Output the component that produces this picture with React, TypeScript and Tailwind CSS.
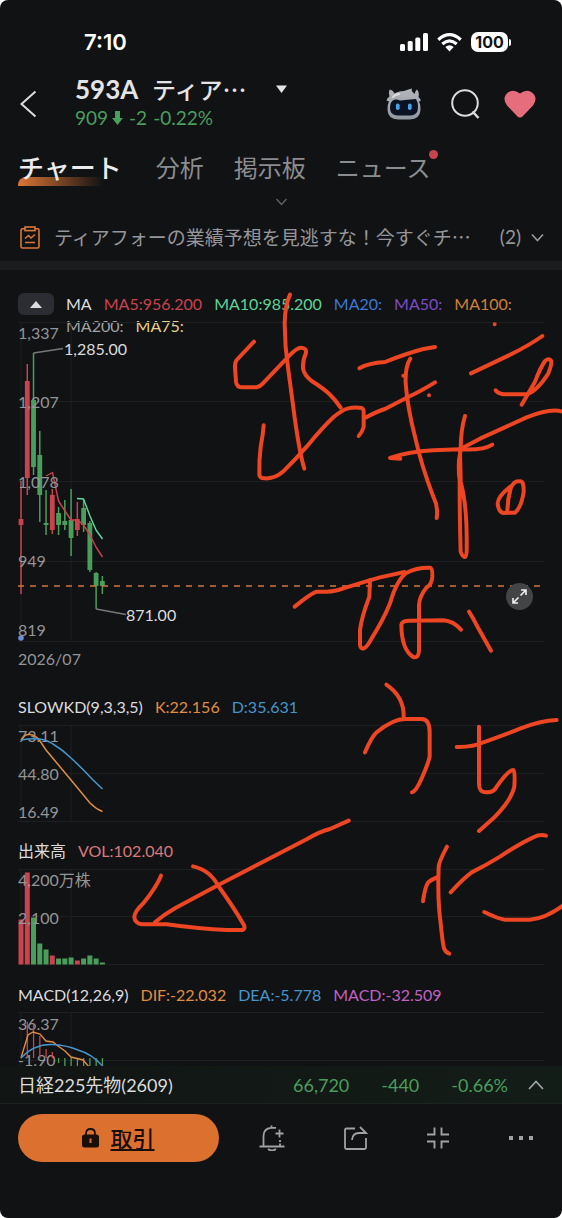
import { useState } from "react";
import type { ReactNode } from "react";

const RED = "#c9434f";
const GREEN = "#4a9e5c";

type Candle = { high: number; low: number; top: number; bottom: number; up?: boolean };

const candles: Candle[] = [
  { high: 160, low: 273, top: 198, bottom: 204, up: true },
  { high: 43, low: 174, top: 60, bottom: 157, up: true },
  { high: 32, low: 154, top: 79, bottom: 146 },
  { high: 110, low: 201, top: 134, bottom: 174 },
  { high: 169, low: 214, top: 202, bottom: 204 },
  { high: 168, low: 213, top: 174, bottom: 209, up: true },
  { high: 186, low: 214, top: 192, bottom: 204 },
  { high: 179, low: 209, top: 200, bottom: 204 },
  { high: 168, low: 235, top: 199, bottom: 217 },
  { high: 181, low: 215, top: 198, bottom: 209, up: true },
  { high: 179, low: 211, top: 187, bottom: 204 },
  { high: 200, low: 251, top: 202, bottom: 249 },
  { high: 251, low: 288, top: 252, bottom: 265 },
  { high: 255, low: 273, top: 260, bottom: 265 },
];

const volumes = [45, 92, 47, 21, 15, 9, 6, 6, 7, 4, 6, 9, 6, 2];
const histogram = [0, 36, 35, 22, 9, 6, -5, -9, -9, -9, -9, -9, -9, -9];

const slotX = (i: number) => 3 + i * 6.26;

// Freehand marks, grouped by the part of the screen they were drawn on
const marks = [
  {
    origin: "translate(220 280) scale(0.33333)",
    paths: [
      "M102 185L50 240Q44 248 45 262L48 305Q50 322 68 322L110 322Q120 320 128 311L205 230Q230 202 245 203Q262 205 257 222Q248 240 249 265Q252 285 275 303Q310 325 328 342Q345 358 362 383",
      "M210 44Q195 75 194 130Q194 200 205 270L225 420Q240 525 253 566",
      "M131 436Q129 465 122 500Q117 540 118 585Q120 596 135 595Q165 597 190 574Q225 540 260 500Q310 440 340 412Q365 390 385 385Q405 380 425 384Q432 387 431 400L431 440Q428 455 416 468",
      "M434 414Q470 395 495 387L560 353Q600 335 645 307",
      "M418 265Q445 249 495 246Q560 220 610 207L645 201",
      "M571 236Q555 260 557 310Q562 380 585 470Q605 560 640 650Q655 680 650 714",
      "M541 536L510 534Q560 516 640 511L720 508Q790 512 817 494",
      "M735 408Q722 450 722 510L717 540Q715 580 719 600Q719 720 722 815Q728 832 735 831Q741 830 740 800Q742 680 722 605L720 510",
      "M720 508L780 476L920 412Q1000 380 1035 398",
      "M753 280L865 227Q930 195 967 168",
      "M827 331Q832 340 850 343L920 342Q950 335 985 280Q995 255 994 243Q988 232 975 243Q960 265 945 305L905 374",
      "M872 619Q832 650 833 672Q836 696 850 699L885 698Q905 680 911 635Q912 603 900 604Q882 600 872 625Q862 660 862 698",
      "M824 133h.1M627 346h.1M550 287h.1",
    ],
  },
  {
    origin: "translate(280 550) scale(0.33333)",
    paths: [
      "M44 170Q95 128 110 125Q150 127 175 120Q230 102 300 82L374 66",
      "M270 90L268 140Q245 200 240 240L240 285Q242 298 252 295Q262 290 275 265Q310 210 330 160Q350 90 380 68Q410 52 450 53Q458 55 457 80Q455 105 440 112Q418 140 417 165L417 300Q417 325 400 321Q365 300 364 225Q365 213 385 212L490 211Q520 213 543 239",
      "M567 185Q580 205 595 235L633 302",
      "M319 404Q372 440 371 500",
      "M255 607Q275 560 290 547Q340 505 380 507L425 507Q450 508 449 550L449 620Q445 640 425 685Q408 724 396 727",
      "M530 591Q580 592 610 577Q690 548 720 536Q780 512 830 510",
      "M597 530L597 700Q596 728 620 727Q640 728 650 710Q685 660 700 660Q706 662 703 710Q695 750 640 805L597 843",
    ],
  },
  {
    origin: "translate(320 800) scale(0.33333)",
    paths: [
      "M381 140Q357 185 356 200Q352 300 362 370Q368 430 372 445Q378 458 388 461",
      "M309 304Q315 260 325 247Q335 238 354 231",
      "M392 277Q430 235 455 217Q500 195 540 170Q600 130 640 112Q660 102 678 107",
      "M493 336Q535 357 555 359L630 359Q680 355 735 312",
    ],
  },
  {
    origin: "translate(0 830) scale(0.33333)",
    paths: [
      "M1046 -28L990 -3Q960 4 920 28L655 165L525 235Q490 255 465 277",
      "M483 137Q470 170 430 220Q403 245 403 262Q405 280 425 283L500 283Q600 297 680 300L728 300Q735 297 733 287Q700 230 655 168Q630 120 579 109",
    ],
  },
];

function Marks() {
  return (
    <svg viewBox="0 0 562 1218" className="pointer-events-none absolute left-0 top-0 w-full" fill="none" stroke="#ee4523" strokeWidth="12" strokeLinecap="round" strokeLinejoin="round" aria-hidden="true">
      {marks.map(m => (
        <g key={m.origin} transform={m.origin}>
          {m.paths.map(d => <path key={d} d={d} />)}
        </g>
      ))}
    </svg>
  );
}

function Grid({ rows, bottom }: { rows: number[]; bottom: number }) {
  return (
    <g stroke="#1d1f21" strokeWidth="1">
      {rows.map(y => <line key={y} x1="0" x2="100%" y1={y} y2={y} />)}
      <line x1="3" x2="3" y1={rows[0]} y2={bottom} />
      <line x1="53" x2="53" y1={rows[0]} y2={bottom} />
    </g>
  );
}

function AxisLabels({ items }: { items: [string, number][] }) {
  return (
    <g fill="#949597" fontSize="16">
      {items.map(([label, y]) => <text key={label} x="0" y={y}>{label}</text>)}
    </g>
  );
}

function PanelTitle({ children }: { children: ReactNode }) {
  return <div className="flex h-6 items-center gap-3 whitespace-nowrap text-base text-[#dcdcde]">{children}</div>;
}

function PriceChart() {
  return (
    <svg className="-mt-4 block h-[350px] w-full" role="img" aria-label="ローソク足チャート">
      <Grid rows={[1.5, 80.5, 160.5, 240.5, 320.5]} bottom={320.5} />
      {candles.map((c, i) => (
        <g key={i} fill={c.up ? RED : GREEN}>
          <rect x={slotX(i) - 0.75} y={c.high} width="1.5" height={c.low - c.high} />
          <rect x={slotX(i) - 2.4} y={c.top} width="4.8" height={c.bottom - c.top} />
        </g>
      ))}
      <g fill="none" strokeWidth="1.4" strokeLinejoin="round">
        <path d="M28 155L34.5 151.5L40.5 180L47 190L53 199L59.5 199L65.5 204L72 214L78 226L84.5 236" stroke={RED} />
        <path d="M59 177.5L65.5 178L72 195L78 209L84.5 218" stroke="#5fdc9d" />
        <path d="M15.5 32L45 27.5M78 288L108 293.5" stroke="#77787a" />
      </g>
      <line x1="0" x2="100%" y1="265" y2="265" stroke="#d0763c" strokeWidth="1.6" strokeDasharray="6 6" />
      <circle cx="3" cy="317" r="2.8" fill="#6f8bd8" />
      <AxisLabels items={[["1,337", 18], ["1,207", 87], ["1,078", 167], ["949", 246], ["819", 315], ["2026/07", 344]]} />
      <g fill="#dcdcde" fontSize="16">
        <text x="46" y="34">1,285.00</text>
        <text x="108" y="300">871.00</text>
      </g>
    </svg>
  );
}

function SlowKdChart() {
  return (
    <svg className="block h-[120px] w-full" role="img" aria-label="SLOWKD">
      <Grid rows={[6.5, 54.5, 102.5]} bottom={102.5} />
      <AxisLabels items={[["73.11", 23], ["44.80", 61], ["16.49", 99]]} />
      <g fill="none" strokeWidth="1.5">
        <path d="M3 21Q7 15 11 15.5Q17 15 22 22L28 31L53 61L72 84Q78 90 84.5 92.5" stroke="#e08e41" />
        <path d="M3 21Q24 17 35 25Q45 31 53 39Q66 51 75 61L84.5 70" stroke="#4596cd" />
      </g>
    </svg>
  );
}

function VolumeChart() {
  return (
    <svg className="block h-[120px] w-full" role="img" aria-label="出来高">
      <Grid rows={[6.5, 53.5, 101.5]} bottom={101.5} />
      {volumes.map((v, i) => (
        <rect key={i} x={slotX(i) - 2.5} y={101.5 - v} width="5" height={v} fill={candles[i].up ? RED : GREEN} />
      ))}
      <AxisLabels items={[["4,200万株", 23], ["2,100", 61]]} />
    </svg>
  );
}

function MacdChart() {
  return (
    <svg className="block h-[120px] w-full" role="img" aria-label="MACD">
      <Grid rows={[5.5, 53.5, 101.5]} bottom={101.5} />
      <AxisLabels items={[["36.37", 23], ["-1.90", 59]]} />
      {histogram.map((v, i) => (
        <rect key={i} x={slotX(i) - 0.6} y={v > 0 ? 51 - v : 51} width="1.3" height={Math.abs(v)} fill={v > 0 ? RED : GREEN} />
      ))}
      <g fill="none" strokeWidth="1.4">
        <path d="M3 51L6 41L10 28L15 25L22 27L28 34L35 35L40 39L47 44L53 50L65 53L72 61" stroke="#e08e41" />
        <path d="M3 51Q16 37 34 37.5Q48 38 60 43Q74 47 84.5 59" stroke="#4596cd" />
      </g>
    </svg>
  );
}

function StatusBar() {
  return (
    <div className="flex h-[74px] items-center justify-between pl-[84px] pr-[51px] pt-[10px] text-white">
      <span className="font-[Inter] text-[22px] font-semibold leading-6">7:10</span>
      <div className="flex items-center gap-[9px]">
        <svg width="28" height="18" viewBox="0 0 28 18" fill="currentColor" aria-hidden="true">
          <rect x="0" y="11" width="5" height="7" rx="1.5" />
          <rect x="7.7" y="8" width="5" height="10" rx="1.5" />
          <rect x="15.3" y="4.5" width="5" height="13.5" rx="1.5" />
          <rect x="23" y="0" width="5" height="18" rx="1.5" />
        </svg>
        <svg width="25" height="19" viewBox="0 0 25 19" fill="none" stroke="currentColor" strokeWidth="3.2" aria-hidden="true">
          <path d="M1.3 6.7Q12.5 -3.3 23.7 6.7M5.3 11Q12.5 4.8 19.7 11" />
          <path d="M8.3 14Q12.5 10.5 16.7 14L12.5 18.5Z" fill="currentColor" stroke="none" />
        </svg>
        <div className="flex items-center gap-px">
          <span className="flex h-5 w-[37px] items-center justify-center rounded-[7px] bg-white font-[Inter] text-base font-bold leading-5 text-[#111214]">100</span>
          <span className="h-[7px] w-[2px] rounded-r-sm bg-white" />
        </div>
      </div>
    </div>
  );
}

function RobotIcon() {
  return (
    <svg width="36" height="32" viewBox="0 0 36 32" aria-hidden="true">
      <defs>
        <linearGradient id="shell" x1="0" y1="0" x2="0" y2="1">
          <stop offset="0" stopColor="#b4b6bb" />
          <stop offset="1" stopColor="#9298a2" />
        </linearGradient>
      </defs>
      <path d="M3.5 1.5Q7 2 8.5 5.500Q12 3 18 3Q23 1 26 .5Q25 2 26.5 4L28.5 6Q29 3 31 1.5Q33.5 4 32.5 9Q34.5 11 35 12.5L33 13.5Q35 17 34.5 22Q34 31 24 31.5H12Q2 31 1.5 22Q1 17 3 13.5L.5 12.5Q1 10 3.5 8.5Q2.5 4 3.5 1.5Z" fill="url(#shell)" />
      <path d="M4.5 16Q6 11 11 11.5Q14 13 19 12L30 11Q32 14 32 19Q32 27 25 27.5H11Q4 27 4 20Z" fill="#0b1322" />
      <path d="M7 9Q9 6.500 13 6" stroke="#dddee1" strokeWidth="2" fill="none" strokeLinecap="round" />
      <rect x="10" y="15.5" width="3.6" height="6.5" rx="1.8" fill="#48a4e8" />
      <rect x="22" y="15.5" width="3.6" height="6.5" rx="1.8" fill="#48a4e8" />
    </svg>
  );
}

function Header() {
  return (
    <header className="flex h-[60px] pl-5 pr-[26px]">
      <button aria-label="戻る" className="w-[55px] shrink-0">
        <svg width="17" height="28" viewBox="0 0 17 28" fill="none" stroke="#dcdcde" strokeWidth="2"><path d="M15.5 1.5L1.5 14L15.5 26.5" /></svg>
      </button>
      <div className="flex-1">
        <button className="flex h-[30px] items-center text-[#e4e4e6]" aria-label="銘柄を切り替え">
          <span className="w-[77px] text-left text-[26px] font-bold leading-[30px]">593A</span>
          <span lang="ja" className="w-[124px] whitespace-nowrap text-left font-['Noto_Sans_CJK_JP',sans-serif] text-2xl font-medium leading-[30px]">ティア…</span>
          <svg width="11" height="8" viewBox="0 0 11 8" fill="currentColor"><path d="M0 0.5H11L5.5 8Z" /></svg>
        </button>
        <p className="flex h-7 items-center gap-[6px] text-[19px] text-[#4a9e5c]">
          <span className="flex items-center gap-1">
            909
            <svg width="11" height="14" viewBox="0 0 11 14" fill="currentColor" aria-hidden="true"><path d="M3 0H8V7H11L5.5 14L0 7H3Z" /></svg>
          </span>
          <span>-2</span>
          <span>-0.22%</span>
        </p>
      </div>
      <div className="flex items-center">
        <button aria-label="AIアシスタント" className="mr-[29px]"><RobotIcon /></button>
        <button aria-label="検索" className="mr-6">
          <svg width="29" height="30" viewBox="0 0 29 30" fill="none" stroke="#dcdcde" strokeWidth="2"><circle cx="14" cy="14" r="12.8" /><path d="M21.5 22.5L27.5 29" strokeWidth="2.5" /></svg>
        </button>
        <button aria-label="お気に入り">
          <svg width="32" height="28" viewBox="0 0 32 28" fill="#e66d7c"><path d="M16 27.5Q14.5 27.5 13 26L3 15.5Q-1.5 9.500 2 4.5Q8-2.500 16 3.5Q24-2.500 30 4.5Q33.5 9.5 29 15.5L19 26Q17.5 27.5 16 27.5Z" /></svg>
        </button>
      </div>
    </header>
  );
}

const tabs = ["分析", "掲示板", "ニュース"];

function Tabs() {
  const [active, setActive] = useState("チャート");
  return (
    <nav className="mt-3 flex h-11 items-center gap-[30px] whitespace-nowrap pl-[18px] text-2xl text-[#8b8c8f]">
      <button onClick={() => setActive("チャート")} aria-current={active === "チャート"} className="relative mr-1 text-[26px] font-medium leading-8 text-[#ececee]">
        <span className="absolute -bottom-[2px] left-0 h-[9px] w-[85px] rounded-tl-lg bg-linear-to-r from-[#dc7534] to-transparent" />
        <span className="relative">チャート</span>
      </button>
      {tabs.map(t => (
        <button key={t} onClick={() => setActive(t)} aria-current={active === t} className="relative leading-8">
          {t}
          {t === "ニュース" && <span className="absolute -right-[7px] -top-[2px] size-[9px] rounded-full bg-[#c9434f]" />}
        </button>
      ))}
    </nav>
  );
}

function Notice() {
  return (
    <button className="flex h-[47px] w-full items-center pl-5 pr-[18px] text-left text-[19px] text-[#96979a]">
      <svg width="20" height="23" viewBox="0 0 20 23" fill="none" stroke="#d9773b" strokeWidth="1.6" className="mr-[14px] shrink-0" aria-hidden="true">
        <rect x="1" y="2.8" width="18" height="19.2" rx="1.5" />
        <rect x="5" y="1" width="10" height="3.6" fill="#111214" />
        <path d="M5 12.5L8.5 9.5L11 12L15 8.5M5 16.5H15" />
      </svg>
      <span lang="ja" className="min-w-0 flex-1 truncate font-['Noto_Sans_CJK_JP',sans-serif]">ティアフォーの業績予想を見逃すな！今すぐチ…</span>
      <span className="ml-4 mr-[10px]">(2)</span>
      <svg width="13" height="9" viewBox="0 0 13 9" fill="none" stroke="currentColor" strokeWidth="1.7"><path d="M1 1.5L6.5 7.5L12 1.5" /></svg>
    </button>
  );
}

function MaLegend() {
  return (
    <div className="flex items-start gap-3 text-base leading-[22px]">
      <button aria-label="指標をたたむ" className="flex h-[22px] w-9 shrink-0 items-center justify-center rounded-md bg-[#2b2d33]">
        <svg width="12" height="7" viewBox="0 0 12 7" fill="#dcdcde"><path d="M6 0L12 7H0Z" /></svg>
      </button>
      <div className="relative flex flex-wrap gap-x-3 leading-[22px]">
        <span className="text-[#dcdcde]">MA</span>
        <span className="text-[#c9434f]">MA5:956.200</span>
        <span className="text-[#5fd497]">MA10:985.200</span>
        <span className="text-[#3d78d6]">MA20:</span>
        <span className="text-[#7b4bc4]">MA50:</span>
        <span className="text-[#d08038]">MA100:</span>
        <span className="text-[#a2a3a5]">MA200:</span>
        <span className="text-[#e6d48c]">MA75:</span>
      </div>
    </div>
  );
}

function Footer() {
  return (
    <footer className="shrink-0">
      <button className="flex h-[37px] w-full items-center bg-linear-to-r from-[#111513] to-[#131d18] px-[18px] text-lg text-[#4a9e5c]">
        <span className="flex-1 text-left text-[#dcdcde]">日経225先物(2609)</span>
        <span className="mr-8">66,720</span>
        <span className="mr-8">-440</span>
        <span className="mr-5">-0.66%</span>
        <svg width="16" height="10" viewBox="0 0 16 10" fill="none" stroke="#a2a3a5" strokeWidth="1.7"><path d="M1 9L8 1.5L15 9" /></svg>
      </button>
      <div className="flex border-t border-[#1b221f] pb-14 pl-[18px] pt-[10px] text-[#a0a1a4]">
        <button className="flex h-12 w-[201px] shrink-0 items-center justify-center gap-[11px] rounded-full bg-[#dc712f] text-[22px] font-medium text-[#1a0f08]">
          <svg width="17" height="20" viewBox="0 0 17 20" fill="none" aria-hidden="true">
            <path d="M4 8V5.5Q4 1 8.5 1T13 5.5V8" stroke="currentColor" strokeWidth="1.8" />
            <rect y="6.5" width="17" height="13" rx="2.5" fill="currentColor" />
            <path d="M8.5 10.5V15" stroke="#dc712f" strokeWidth="2" />
          </svg>
          <span className="underline underline-offset-2">取引</span>
        </button>
        <div className="grid flex-1 grid-cols-4 items-center pl-3">
          <button aria-label="アラート追加" className="flex justify-center">
            <svg width="26" height="26" viewBox="0 0 26 26" fill="none" stroke="currentColor" strokeWidth="1.8"><path d="M.5 21.5H25.5M4.5 21V11Q4.5 3.5 12 2.8H17M12.5 .5V3M21 15V17M21 18.5V21M16.5 8.500H24.500M20.5 4.5V12.500M9 24Q13 27 17 24" /></svg>
          </button>
          <button aria-label="共有" className="flex justify-center">
            <svg width="25" height="25" viewBox="0 0 25 25" fill="none" stroke="currentColor" strokeWidth="1.8"><path d="M12 2.5H3.5Q2 2.5 2 4V21.5Q2 23 3.5 23H21.5Q23 23 23 21.5V12M9 14Q9.5 7 16 7H23L17 1" /></svg>
          </button>
          <button aria-label="縮小表示" className="flex justify-center">
            <svg width="24" height="24" viewBox="0 0 24 24" fill="none" stroke="currentColor" strokeWidth="1.9"><path d="M1 8.5H8.5V1.5M15.5 1.5V8.5H23M1 15.5H8.5V22.5M15.5 22.5V15.5H23" /></svg>
          </button>
          <button aria-label="その他" className="flex justify-center">
            <svg width="24" height="6" viewBox="0 0 24 6" fill="currentColor"><path d="M0 1H4V5H0ZM10 1H14V5H10ZM20 1H24V5H20Z" /></svg>
          </button>
        </div>
      </div>
    </footer>
  );
}

export default function App() {
  return (
    <div className="bg-white">
      <div className="relative flex h-screen flex-col overflow-hidden rounded-lg bg-[#111214] font-[Lato,'Noto_Sans_CJK_JP',sans-serif]">
        <StatusBar />
        <Header />
        <Tabs />
        <button aria-label="タブを展開" className="flex h-6 shrink-0 items-center justify-center">
          <svg width="11" height="8" viewBox="0 0 11 8" fill="none" stroke="#606165" strokeWidth="1.5"><path d="M.5 1L5.5 6.5L10.5 1" /></svg>
        </button>
        <Notice />
        <div className="h-[9px] shrink-0 bg-[#1b1c1e]" />

        <main className="min-h-0 flex-1 overflow-hidden px-[18px] pt-[23px]">
          <MaLegend />
          <div className="relative">
            <PriceChart />
            <button aria-label="全画面表示" className="absolute bottom-[61px] right-[11px] flex size-[27px] items-center justify-center rounded-full bg-[#434446]">
              <svg width="15" height="15" viewBox="0 0 15 15" fill="none" stroke="#f0f0f2" strokeWidth="1.6"><path d="M9 1H14V6M14 1L8.5 6.5M6 14H1V9M1 14L6.5 8.5" /></svg>
            </button>
          </div>
          <section className="mt-6">
            <PanelTitle>
              <h2>SLOWKD(9,3,3,5)</h2>
              <span className="text-[#e08e41]">K:22.156</span>
              <span className="text-[#4596cd]">D:35.631</span>
            </PanelTitle>
            <SlowKdChart />
          </section>
          <section>
            <PanelTitle>
              <h2>出来高</h2>
              <span className="text-[#d87a7a]">VOL:102.040</span>
            </PanelTitle>
            <VolumeChart />
          </section>
          <section>
            <PanelTitle>
              <h2>MACD(12,26,9)</h2>
              <span className="text-[#e08e41]">DIF:-22.032</span>
              <span className="text-[#4596cd]">DEA:-5.778</span>
              <span className="text-[#c162c4]">MACD:-32.509</span>
            </PanelTitle>
            <MacdChart />
          </section>
        </main>

        <Footer />
        <Marks />
      </div>
    </div>
  );
}
